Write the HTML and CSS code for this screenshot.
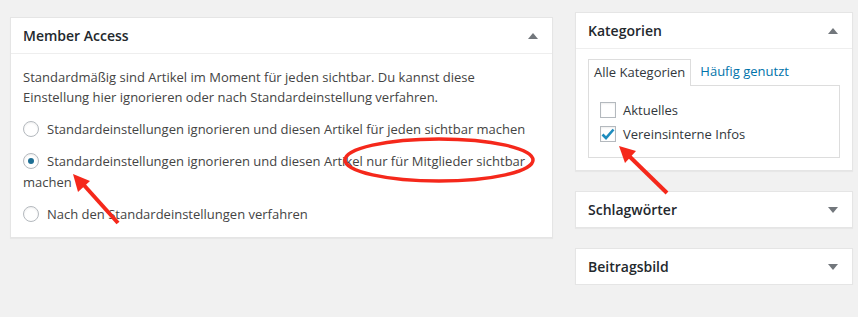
FILE: index.html
```html
<!DOCTYPE html>
<html lang="de">
<head>
  <meta charset="UTF-8" />
  <title>Beitrag bearbeiten</title>
  <link rel="stylesheet" href="styles.css">
</head>
<body>
  <div class="screen">
    <div class="main">
      <section class="postbox">
        <div class="postbox-head">
          <h2>Member Access</h2>
          <span class="toggle up"></span>
        </div>
        <div class="inside">
          <p>Standardmäßig sind Artikel im Moment für jeden sichtbar. Du kannst diese Einstellung hier ignorieren oder nach Standardeinstellung verfahren.</p>
          <label class="radio-row"><span class="radio"></span>Standardeinstellungen ignorieren und diesen Artikel für jeden sichtbar machen</label>
          <label class="radio-row"><span class="radio checked"></span>Standardeinstellungen ignorieren und diesen Artikel nur für Mitglieder sichtbar machen</label>
          <label class="radio-row"><span class="radio"></span>Nach den Standardeinstellungen verfahren</label>
        </div>
      </section>
    </div>

    <div class="side">
      <section class="postbox">
        <div class="postbox-head">
          <h2>Kategorien</h2>
          <span class="toggle up"></span>
        </div>
        <div class="inside">
          <ul class="tabs">
            <li class="tab active">Alle Kategorien</li>
            <li class="tab"><a href="#">Häufig genutzt</a></li>
          </ul>
          <div class="tab-panel">
            <label class="check-row"><span class="checkbox"></span>Aktuelles</label>
            <label class="check-row"><span class="checkbox checked">
              <svg width="14" height="12" viewBox="0 0 14 12"><path d="M1.5 6.5 L5 10 L12.5 1.5" fill="none" stroke="#1e8cbe" stroke-width="2.6"/></svg>
            </span>Vereinsinterne Infos</label>
          </div>
        </div>
      </section>

      <section class="postbox closed">
        <div class="postbox-head">
          <h2>Schlagwörter</h2>
          <span class="toggle down"></span>
        </div>
      </section>

      <section class="postbox closed">
        <div class="postbox-head">
          <h2>Beitragsbild</h2>
          <span class="toggle down"></span>
        </div>
      </section>
    </div>
  </div>

  <!-- annotations drawn on top of the screenshot -->
  <svg class="annotations" width="858" height="317" viewBox="0 0 858 317">
    <ellipse cx="439" cy="160" rx="94" ry="21" fill="none" stroke="#f5281b" stroke-width="3.5"/>
    <line x1="118" y1="223" x2="82" y2="183" stroke="#f5281b" stroke-width="4"/>
    <polygon points="73,174 90,181 78,192" fill="#f5281b"/>
    <line x1="667" y1="193" x2="628" y2="155" stroke="#f5281b" stroke-width="4"/>
    <polygon points="619,146 636,151 625,163" fill="#f5281b"/>
  </svg>
</body>
</html>
```

FILE: styles.css
```css
body {
  margin: 0;
  background: #f1f1f1;
  font-family: "Open Sans", "Liberation Sans", sans-serif;
  font-size: 13px;
  color: #444;
}

.screen {
  display: flex;
  align-items: flex-start;
  padding: 0 5px 0 10px;
  gap: 22px;
}

.main {
  width: 543px;
  padding-top: 17px;
}

.side {
  width: 278px;
  padding-top: 12px;
  display: flex;
  flex-direction: column;
  gap: 20px;
}

.postbox {
  background: #fff;
  border: 1px solid #e5e5e5;
  box-shadow: 0 1px 1px rgba(0, 0, 0, 0.04);
}

.postbox-head {
  display: flex;
  align-items: center;
  justify-content: space-between;
  height: 35px;
  padding: 0 14px 0 12px;
  border-bottom: 1px solid #eee;
}

.closed .postbox-head {
  border-bottom: none;
}

.postbox-head h2 {
  margin: 0;
  font-size: 14px;
  font-weight: 600;
  color: #23282d;
}

.toggle {
  width: 0;
  height: 0;
  border-left: 5px solid transparent;
  border-right: 5px solid transparent;
}

.toggle.up {
  border-bottom: 6px solid #72777c;
}

.toggle.down {
  border-top: 6px solid #72777c;
}

.main .inside {
  padding: 13px 12px 12px;
}

.inside p {
  margin: 0 0 12px;
  line-height: 20px;
}

.radio-row {
  display: block;
  line-height: 21px;
  margin-bottom: 11px;
}

.radio-row:last-child {
  margin-bottom: 0;
}

.radio {
  display: inline-block;
  box-sizing: border-box;
  width: 16px;
  height: 16px;
  margin-right: 8px;
  border: 1px solid #b4b9be;
  border-radius: 50%;
  background: #fff;
  box-shadow: inset 0 1px 2px rgba(0, 0, 0, 0.07);
  vertical-align: -3px;
  position: relative;
}

.radio.checked::after {
  content: "";
  position: absolute;
  left: 4px;
  top: 4px;
  width: 6px;
  height: 6px;
  border-radius: 50%;
  background: #1e6f94;
}

.side .inside {
  padding: 10px 12px 12px;
}

.tabs {
  display: flex;
  margin: 0;
  padding: 0;
  list-style: none;
  height: 26px;
}

.tab {
  box-sizing: border-box;
  height: 26px;
  line-height: 25px;
  padding: 0 5px;
  margin-right: 4px;
}

.tab.active {
  height: 27px;
  border: 1px solid #ddd;
  border-bottom: none;
  color: #32373c;
  background: #fff;
  position: relative;
  z-index: 1;
}

.tab a {
  color: #0073aa;
  text-decoration: none;
}

.tab-panel {
  border: 1px solid #ddd;
  padding: 12px 11px 11px;
}

.check-row {
  display: flex;
  align-items: center;
  height: 24px;
  color: #32373c;
}

.checkbox {
  box-sizing: border-box;
  width: 16px;
  height: 16px;
  margin-right: 7px;
  border: 1px solid #b4b9be;
  background: #fff;
  box-shadow: inset 0 1px 2px rgba(0, 0, 0, 0.07);
  display: flex;
  align-items: center;
  justify-content: center;
}

.annotations {
  position: absolute;
  left: 0;
  top: 0;
  pointer-events: none;
}
```
